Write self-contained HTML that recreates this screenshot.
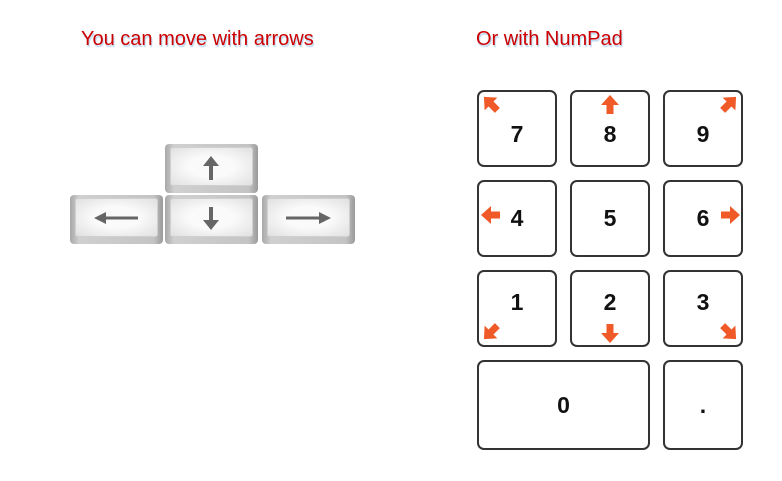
<!DOCTYPE html>
<html><head><style>
body{margin:0;width:782px;height:481px;background:#fff;position:relative;overflow:hidden;font-family:"Liberation Sans",sans-serif}
.t{position:absolute;top:28px;font-size:20px;color:#cc0000;text-shadow:1px 2px 1px #b8d4ee;white-space:nowrap}
.k{position:absolute;box-sizing:border-box;border:2px solid #333;border-radius:7px;background:#fff;font-size:23px;font-weight:bold;color:#111;display:flex;align-items:center;justify-content:center}
.a{position:absolute;width:93px;height:49px;box-sizing:border-box;border-radius:4px;background:linear-gradient(90deg,#a8a8a8,#d0d0d0 10%,#c4c4c4 90%,#9a9a9a);}
.a div{position:absolute;left:5px;top:3px;right:5px;bottom:7px;border-radius:3px;background:radial-gradient(ellipse at center,#fafafa 40%,#e0e0e0);border:1px solid #d0d0d0}
.o{position:absolute}
</style></head><body>
<div class="t" style="left:81px">You can move with arrows</div>
<div class="t" style="left:476px">Or with NumPad</div>

<div class="a" style="left:165px;top:144px"><div></div></div>
<div class="a" style="left:70px;top:195px"><div></div></div>
<div class="a" style="left:165px;top:195px"><div></div></div>
<div class="a" style="left:262px;top:195px"><div></div></div>
<svg class="o" style="left:0;top:0" width="400" height="260">
<g fill="#666">
<path d="M211 156 L203 166 L209 166 L209 180 L213 180 L213 166 L219 166 Z"/>
<path d="M211 230 L203 220 L209 220 L209 207 L213 207 L213 220 L219 220 Z"/>
<path d="M94 218 L106 212 L106 216.5 L138 216.5 L138 219.5 L106 219.5 L106 224 Z"/>
<path d="M331 218 L319 212 L319 216.5 L286 216.5 L286 219.5 L319 219.5 L319 224 Z"/>
</g></svg>

<div class="k" style="left:477px;top:90px;width:80px;height:77px;padding-top:12px">7</div>
<div class="k" style="left:570px;top:90px;width:80px;height:77px;padding-top:12px">8</div>
<div class="k" style="left:663px;top:90px;width:80px;height:77px;padding-top:12px">9</div>
<div class="k" style="left:477px;top:180px;width:80px;height:77px">4</div>
<div class="k" style="left:570px;top:180px;width:80px;height:77px">5</div>
<div class="k" style="left:663px;top:180px;width:80px;height:77px">6</div>
<div class="k" style="left:477px;top:270px;width:80px;height:77px;padding-bottom:12px">1</div>
<div class="k" style="left:570px;top:270px;width:80px;height:77px;padding-bottom:12px">2</div>
<div class="k" style="left:663px;top:270px;width:80px;height:77px;padding-bottom:12px">3</div>
<div class="k" style="left:477px;top:360px;width:173px;height:90px">0</div>
<div class="k" style="left:663px;top:360px;width:80px;height:90px">.</div>

<svg class="o" style="left:0;top:0" width="782" height="481">
<defs><path id="ar" d="M0 -10 L9 0 L3.5 0 L3.5 9 L-3.5 9 L-3.5 0 L-9 0 Z" fill="#f05a28"/></defs>
<use href="#ar" transform="translate(491,104) rotate(-45)"/>
<use href="#ar" transform="translate(610,105)"/>
<use href="#ar" transform="translate(729,104) rotate(45)"/>
<use href="#ar" transform="translate(491,215) rotate(-90)"/>
<use href="#ar" transform="translate(730,215) rotate(90)"/>
<use href="#ar" transform="translate(491,332) rotate(-135)"/>
<use href="#ar" transform="translate(610,333) rotate(180)"/>
<use href="#ar" transform="translate(729,332) rotate(135)"/>
</svg>
</body></html>
